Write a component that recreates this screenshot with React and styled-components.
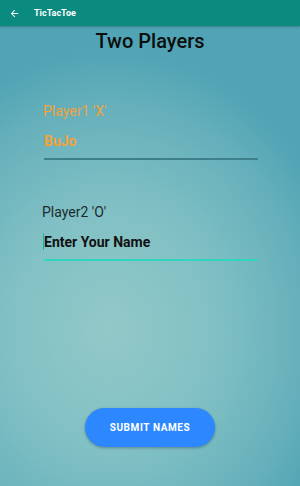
import styled, { createGlobalStyle } from "styled-components";

const GlobalStyle = createGlobalStyle`
  html, body {
    margin: 0;
    padding: 0;
  }
  body {
    font-family: Roboto, "Liberation Sans", sans-serif;
  }
`;

export default function App() {
    return (
        <Screen>
            <GlobalStyle />
            <AppBar>
                <BackArrow viewBox="0 0 24 24">
                    <path d="M20 11H7.83l5.59-5.59L12 4l-8 8 8 8 1.41-1.41L7.83 13H20v-2z" fill="#fff" />
                </BackArrow>
                <AppTitle>TicTacToe</AppTitle>
            </AppBar>

            <Body>
                <Heading>Two Players</Heading>

                <Field $top={50}>
                    <Label $active>Player1 'X'</Label>
                    <Value $active>BuJo</Value>
                    <Underline $color="#3d7f8a" />
                </Field>

                <Field $top={44}>
                    <Label>Player2 'O'</Label>
                    <Value>
                        <Caret />
                        Enter Your Name
                    </Value>
                    <Underline $color="#2fd6bd" />
                </Field>

                <Spacer />

                <SubmitButton>SUBMIT NAMES</SubmitButton>
            </Body>
        </Screen>
    );
}

const Screen = styled.div`
  width: 300px;
  height: 486px;
  display: flex;
  flex-direction: column;
  overflow: hidden;
  background: radial-gradient(
    ellipse 240px 280px at 110px 330px,
    #93c8c8 0%,
    #80c0c4 45%,
    #66b0bb 80%,
    #50a4b5 100%
  ),
  #50a4b5;
`

const AppBar = styled.div`
  height: 26px;
  flex-shrink: 0;
  display: flex;
  align-items: center;
  background-color: #0b8a80;
  box-shadow: 0 1px 2px rgba(0, 0, 0, 0.25);
  padding-left: 9px;
`

const BackArrow = styled.svg`
  width: 11px;
  height: 11px;
`

const AppTitle = styled.div`
  margin-left: 14px;
  color: #fff;
  font-size: 9px;
  font-weight: 700;
`

const Body = styled.div`
  flex: 1;
  display: flex;
  flex-direction: column;
  align-items: center;
  padding-bottom: 39px;
`

const Heading = styled.h1`
  margin: 3px 0 0;
  font-size: 20px;
  font-weight: 500;
  color: #0d0d0d;
  line-height: 24px;
`

const Field = styled.div`
  width: 214px;
  margin-top: ${(p) => p.$top}px;
  margin-left: 2px;
  display: flex;
  flex-direction: column;
`

const Label = styled.div`
  font-size: 14px;
  line-height: 16px;
  color: ${(p) => (p.$active ? "#f2a33a" : "#1c2a30")};
  margin-left: ${(p) => (p.$active ? "-1px" : "-2px")};
`

const Value = styled.div`
  position: relative;
  margin-top: 13px;
  font-size: 14px;
  line-height: 18px;
  font-weight: 700;
  color: ${(p) => (p.$active ? "#f2a33a" : "#111")};
`

const Caret = styled.span`
  position: absolute;
  left: -1px;
  top: 0;
  width: 1px;
  height: 17px;
  background: #17b59c;
`

const Underline = styled.div`
  margin-top: 8px;
  height: 2px;
  background: ${(p) => p.$color};
`

const Spacer = styled.div`
  flex: 1;
`

const SubmitButton = styled.button`
  width: 130px;
  height: 39px;
  border: none;
  border-radius: 20px;
  background: #2d88ff;
  color: #fff;
  font-family: Roboto, "Liberation Sans", sans-serif;
  font-size: 10px;
  font-weight: 700;
  letter-spacing: 0.6px;
  box-shadow: 0 1px 3px rgba(0, 0, 0, 0.3);
`
